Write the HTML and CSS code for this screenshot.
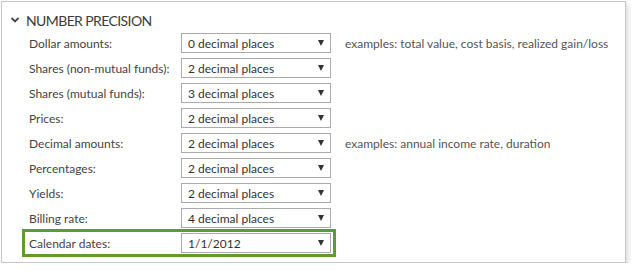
FILE: index.html
```html
<!DOCTYPE html>
<html>
<head>
    <link rel="stylesheet" href="styles.css">
</head>
<body>
<div class="panel">
    <div class="section-header">
        <svg class="chevron" width="8" height="6" viewBox="0 0 8 6">
            <path d="M0.5 1 L4 4.5 L7.5 1" fill="none" stroke="#444" stroke-width="1.8"/>
        </svg>
        <span class="section-title">NUMBER PRECISION</span>
    </div>

    <div class="rows">
        <div class="row">
            <span class="row-label">Dollar amounts:</span>
            <div class="dropdown"><span>0 decimal places</span><span class="arrow"></span></div>
            <span class="row-note">examples: total value, cost basis, realized gain/loss</span>
        </div>
        <div class="row">
            <span class="row-label">Shares (non-mutual funds):</span>
            <div class="dropdown"><span>2 decimal places</span><span class="arrow"></span></div>
        </div>
        <div class="row">
            <span class="row-label">Shares (mutual funds):</span>
            <div class="dropdown"><span>3 decimal places</span><span class="arrow"></span></div>
        </div>
        <div class="row">
            <span class="row-label">Prices:</span>
            <div class="dropdown"><span>2 decimal places</span><span class="arrow"></span></div>
        </div>
        <div class="row">
            <span class="row-label">Decimal amounts:</span>
            <div class="dropdown"><span>2 decimal places</span><span class="arrow"></span></div>
            <span class="row-note">examples: annual income rate, duration</span>
        </div>
        <div class="row">
            <span class="row-label">Percentages:</span>
            <div class="dropdown"><span>2 decimal places</span><span class="arrow"></span></div>
        </div>
        <div class="row">
            <span class="row-label">Yields:</span>
            <div class="dropdown"><span>2 decimal places</span><span class="arrow"></span></div>
        </div>
        <div class="row">
            <span class="row-label">Billing rate:</span>
            <div class="dropdown"><span>4 decimal places</span><span class="arrow"></span></div>
        </div>
        <div class="row row-highlight">
            <span class="row-label">Calendar dates:</span>
            <div class="dropdown"><span>1/1/2012</span><span class="arrow"></span></div>
        </div>
    </div>
</div>
</body>
</html>
```
FILE: styles.css
```css
* {
    margin: 0;
    padding: 0;
    box-sizing: border-box;
}

body {
    background: white;
    font-family: Lato, 'Open Sans', sans-serif;
    font-size: 12px;
    color: #444;
}

.panel {
    margin: 1px 0 0 1px;
    width: 625px;
    height: 262px;
    border: 1px solid #c6c6c6;
    box-shadow: 3px 3px 4px rgba(0, 0, 0, 0.12);
    background: white;
}

.section-header {
    display: flex;
    align-items: center;
    height: 31px;
    padding: 5px 0 0 9px;
}

.chevron {
    margin-right: 7px;
}

.section-title {
    font-size: 14px;
    color: #3c3c3c;
    letter-spacing: -0.6px;
}

.rows {
    display: flex;
    flex-direction: column;
    gap: 5px;
    padding-left: 24px;
}

.row {
    display: flex;
    align-items: center;
    height: 20px;
    padding-left: 3px;
}

.row-label {
    width: 152px;
    flex-shrink: 0;
    color: #444;
}

.dropdown {
    display: flex;
    align-items: center;
    justify-content: space-between;
    width: 150px;
    height: 20px;
    padding: 0 6px 0 6px;
    border: 1px solid #ababab;
    background: white;
    color: #333;
}

.arrow {
    width: 0;
    height: 0;
    border-left: 3.5px solid transparent;
    border-right: 3.5px solid transparent;
    border-top: 6px solid #333;
}

.row-note {
    margin-left: 14px;
    color: #555;
    white-space: nowrap;
}

.row-highlight {
    width: fit-content;
    padding-right: 1px;
    outline: 3px solid #5b9e2d;
    outline-offset: 1px;
}
```
